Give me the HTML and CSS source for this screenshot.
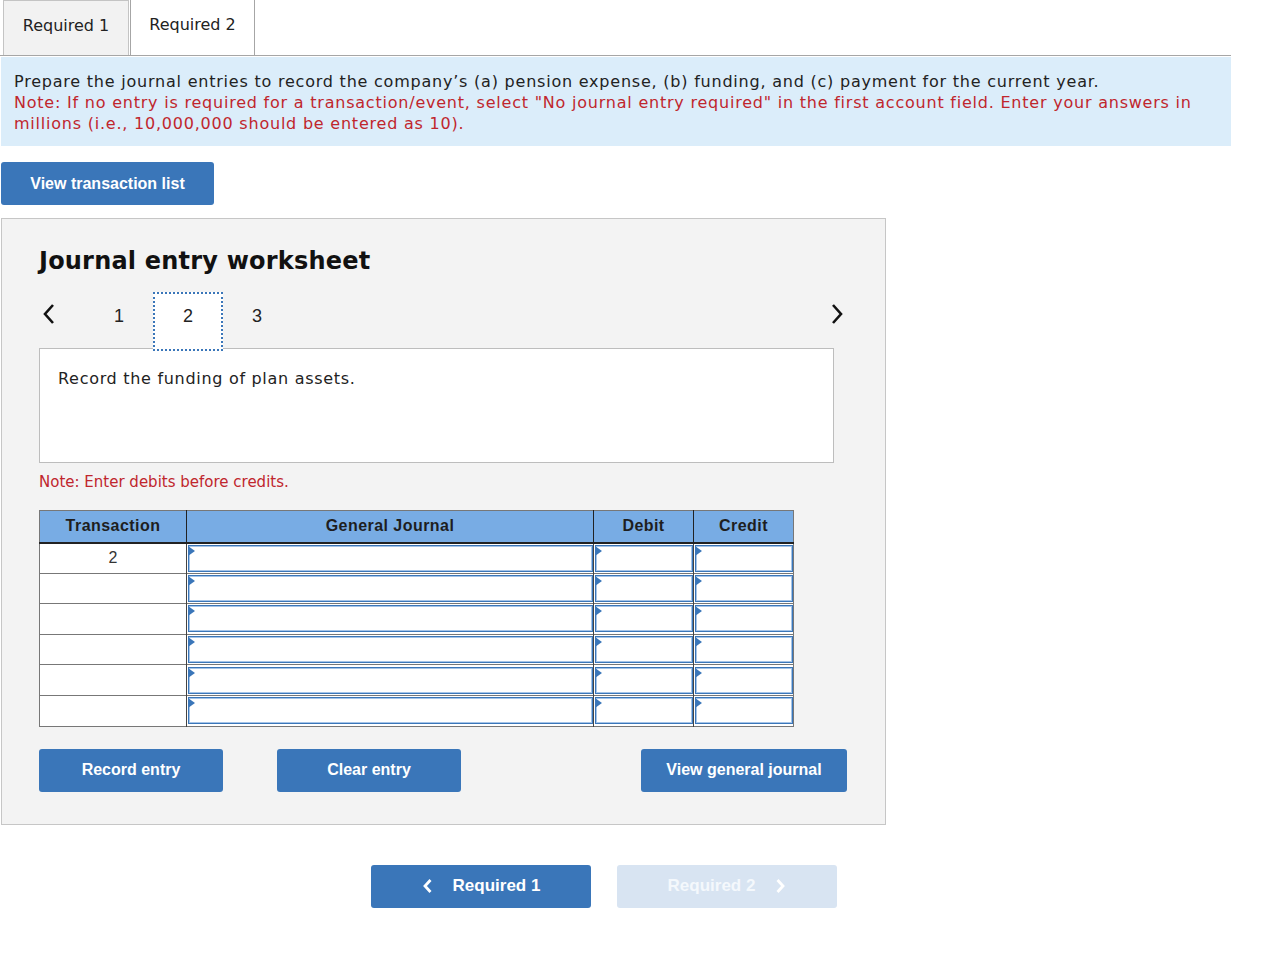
FILE: index.html
```html
<!DOCTYPE html>
<html lang="en">
<head>
<meta charset="utf-8">
<title>Journal entry worksheet</title>
<link rel="stylesheet" href="styles.css">
</head>
<body>
<div class="page">
  <div class="tabs">
    <div class="tab tab-inactive">Required 1</div>
    <div class="tab tab-active">Required 2</div>
  </div>
  <div class="instructions">
    <p class="instr-main">Prepare the journal entries to record the company’s (a) pension expense, (b) funding, and (c) payment for the current year.</p>
    <p class="instr-note">Note: If no entry is required for a transaction/event, select "No journal entry required" in the first account field. Enter your answers in millions (i.e., 10,000,000 should be entered as 10).</p>
  </div>
  <button class="btn btn-list">View transaction list</button>

  <div class="worksheet">
    <h2 class="ws-title">Journal entry worksheet</h2>
    <div class="pager">
      <span class="pager-arrow pager-prev">
        <svg width="14" height="22" viewBox="0 0 14 22"><polyline points="11,2 3,11 11,20" fill="none" stroke="#111" stroke-width="2.6"/></svg>
      </span>
      <span class="pager-num">1</span>
      <span class="pager-num pager-current">2</span>
      <span class="pager-num">3</span>
      <span class="pager-spacer"></span>
      <span class="pager-arrow pager-next">
        <svg width="14" height="22" viewBox="0 0 14 22"><polyline points="3,2 11,11 3,20" fill="none" stroke="#111" stroke-width="2.6"/></svg>
      </span>
    </div>
    <div class="desc">Record the funding of plan assets.</div>
    <p class="ws-note">Note: Enter debits before credits.</p>

    <table class="journal">
      <thead>
        <tr>
          <th class="c-trans">Transaction</th>
          <th class="c-gj">General Journal</th>
          <th class="c-amt">Debit</th>
          <th class="c-amt">Credit</th>
        </tr>
      </thead>
      <tbody>
        <tr><td class="t-num">2</td><td class="inp"><div class="field"></div></td><td class="inp"><div class="field"></div></td><td class="inp"><div class="field"></div></td></tr>
        <tr><td class="t-num"></td><td class="inp"><div class="field"></div></td><td class="inp"><div class="field"></div></td><td class="inp"><div class="field"></div></td></tr>
        <tr><td class="t-num"></td><td class="inp"><div class="field"></div></td><td class="inp"><div class="field"></div></td><td class="inp"><div class="field"></div></td></tr>
        <tr><td class="t-num"></td><td class="inp"><div class="field"></div></td><td class="inp"><div class="field"></div></td><td class="inp"><div class="field"></div></td></tr>
        <tr><td class="t-num"></td><td class="inp"><div class="field"></div></td><td class="inp"><div class="field"></div></td><td class="inp"><div class="field"></div></td></tr>
        <tr><td class="t-num"></td><td class="inp"><div class="field"></div></td><td class="inp"><div class="field"></div></td><td class="inp"><div class="field"></div></td></tr>
      </tbody>
    </table>

    <div class="ws-actions">
      <button class="btn btn-record">Record entry</button>
      <button class="btn btn-clear">Clear entry</button>
      <button class="btn btn-view">View general journal</button>
    </div>
  </div>

  <div class="nav">
    <button class="btn btn-nav">
      <svg width="11" height="16" viewBox="0 0 11 16"><polyline points="8.5,2 3,8 8.5,14" fill="none" stroke="#fff" stroke-width="2.8"/></svg>
      <span>Required 1</span>
    </button>
    <button class="btn btn-nav btn-disabled">
      <span>Required 2</span>
      <svg width="11" height="16" viewBox="0 0 11 16"><polyline points="2.5,2 8,8 2.5,14" fill="none" stroke="#fff" stroke-width="2.8"/></svg>
    </button>
  </div>
</div>
</body>
</html>
```

FILE: styles.css
```css
* { box-sizing: border-box; }

body {
  margin: 0;
  background: #fff;
  font-family: "DejaVu Sans", Verdana, sans-serif;
  color: #222;
}

.page {
  width: 1231px;
}

/* Tabs */
.tabs {
  display: flex;
  height: 56px;
  border-bottom: 1px solid #a6a6a6;
}

.tab {
  height: 55px;
  padding: 15px 0 0;
  font-size: 16px;
  text-align: center;
  color: #222;
}

.tab-inactive {
  width: 126px;
  margin-left: 3px;
  background: #f2f2f2;
  border: 1px solid #c4c4c4;
  border-bottom: none;
}

.tab-active {
  width: 125px;
  margin-left: 1px;
  background: #fff;
  border-left: 1px solid #a6a6a6;
  border-right: 1px solid #a6a6a6;
}

/* Instructions */
.instructions {
  margin: 1px 0 0 1px;
  width: 1230px;
  height: 89px;
  background: #dbedfa;
  padding: 14px 13px 0;
  font-size: 16px;
  letter-spacing: 0.78px;
  line-height: 21px;
}

.instructions p {
  margin: 0;
}

.instr-main { color: #222; }
.instr-note { color: #c0262d; }

/* Buttons */
.btn {
  display: inline-flex;
  align-items: center;
  justify-content: center;
  height: 43px;
  border: none;
  border-radius: 3px;
  background: #3a76b9;
  color: #fff;
  font-family: "Liberation Sans", Arial, sans-serif;
  font-weight: bold;
  font-size: 16px;
  padding: 0;
  cursor: pointer;
}

.btn-list {
  display: flex;
  width: 213px;
  margin: 16px 0 0 1px;
}

/* Worksheet */
.worksheet {
  margin: 13px 0 0 1px;
  width: 885px;
  background: #f3f3f3;
  border: 1px solid #c6c6c6;
  padding: 26px 0 32px 37px;
}

.ws-title {
  margin: 0;
  font-size: 24px;
  line-height: 32px;
  font-weight: bold;
  color: #111;
  letter-spacing: 0.2px;
}

.pager {
  display: flex;
  align-items: flex-start;
  width: 805px;
  height: 59px;
  margin: 15px 0 -3px;
  position: relative;
  z-index: 1;
}

.pager-arrow {
  display: flex;
  align-items: center;
  padding-top: 11px;
}

.pager-prev {
  width: 46px;
  padding-left: 3px;
}

.pager-num {
  width: 68px;
  height: 59px;
  display: flex;
  justify-content: center;
  padding-top: 14px;
  font-family: "Liberation Sans", Arial, sans-serif;
  font-size: 18px;
  color: #222;
}

.pager-current {
  width: 70px;
  padding-top: 12px;
  background: #fff;
  border: 2px dotted #3a76b9;
}

.pager-spacer { flex: 1; }

.desc {
  width: 795px;
  height: 115px;
  background: #fff;
  border: 1px solid #bdbdbd;
  padding: 19px 18px 18px;
  font-size: 16px;
  letter-spacing: 0.7px;
  line-height: 22px;
  color: #222;
}

.ws-note {
  margin: 8px 0 0;
  font-size: 15px;
  line-height: 22px;
  color: #c0262d;
}

/* Journal table */
.journal {
  margin-top: 17px;
  border-collapse: collapse;
  width: 755px;
  background: #fff;
  border: 1px solid #777;
  font-family: "Liberation Sans", Arial, sans-serif;
}

.journal th {
  background: #78ace4;
  height: 32px;
  font-size: 16px;
  letter-spacing: 0.45px;
  font-weight: bold;
  color: #1e1e1e;
  border-left: 1px solid #222;
  border-bottom: 2px solid #222;
  padding: 0;
}

.journal th:first-child { border-left: none; }

.c-trans { width: 147px; }
.c-gj { width: 407px; }
.c-amt { width: 100px; }

.journal td {
  height: 30.6px;
  padding: 0;
  border-top: 1px solid #777;
  border-left: 1px solid #444;
}

.journal td:first-child { border-left: none; }

.t-num {
  text-align: center;
  font-size: 16px;
  color: #333;
}

.journal td.inp {
  padding: 1px 0 1px 1px;
}

.field {
  position: relative;
  height: 27px;
  border: 1px solid #3a76b9;
  box-shadow: inset 0 0 0 1px #a6c4e7;
  background: #fff;
}

.field::before {
  content: "";
  position: absolute;
  left: -1px;
  top: 0;
  border-left: 7px solid #3a76b9;
  border-top: 5px solid transparent;
  border-bottom: 5px solid transparent;
}

.ws-actions {
  display: flex;
  margin-top: 22px;
}

.btn-record { width: 184px; }
.btn-clear { width: 184px; margin-left: 54px; }
.btn-view { width: 206px; margin-left: 180px; }

/* Bottom nav */
.nav {
  display: flex;
  margin: 40px 0 0 371px;
  gap: 26px;
}

.btn-nav {
  width: 220px;
  font-size: 17px;
  gap: 20px;
}

.btn-disabled {
  background: #d8e4f2;
  color: #f4f8fc;
  cursor: default;
}
```
